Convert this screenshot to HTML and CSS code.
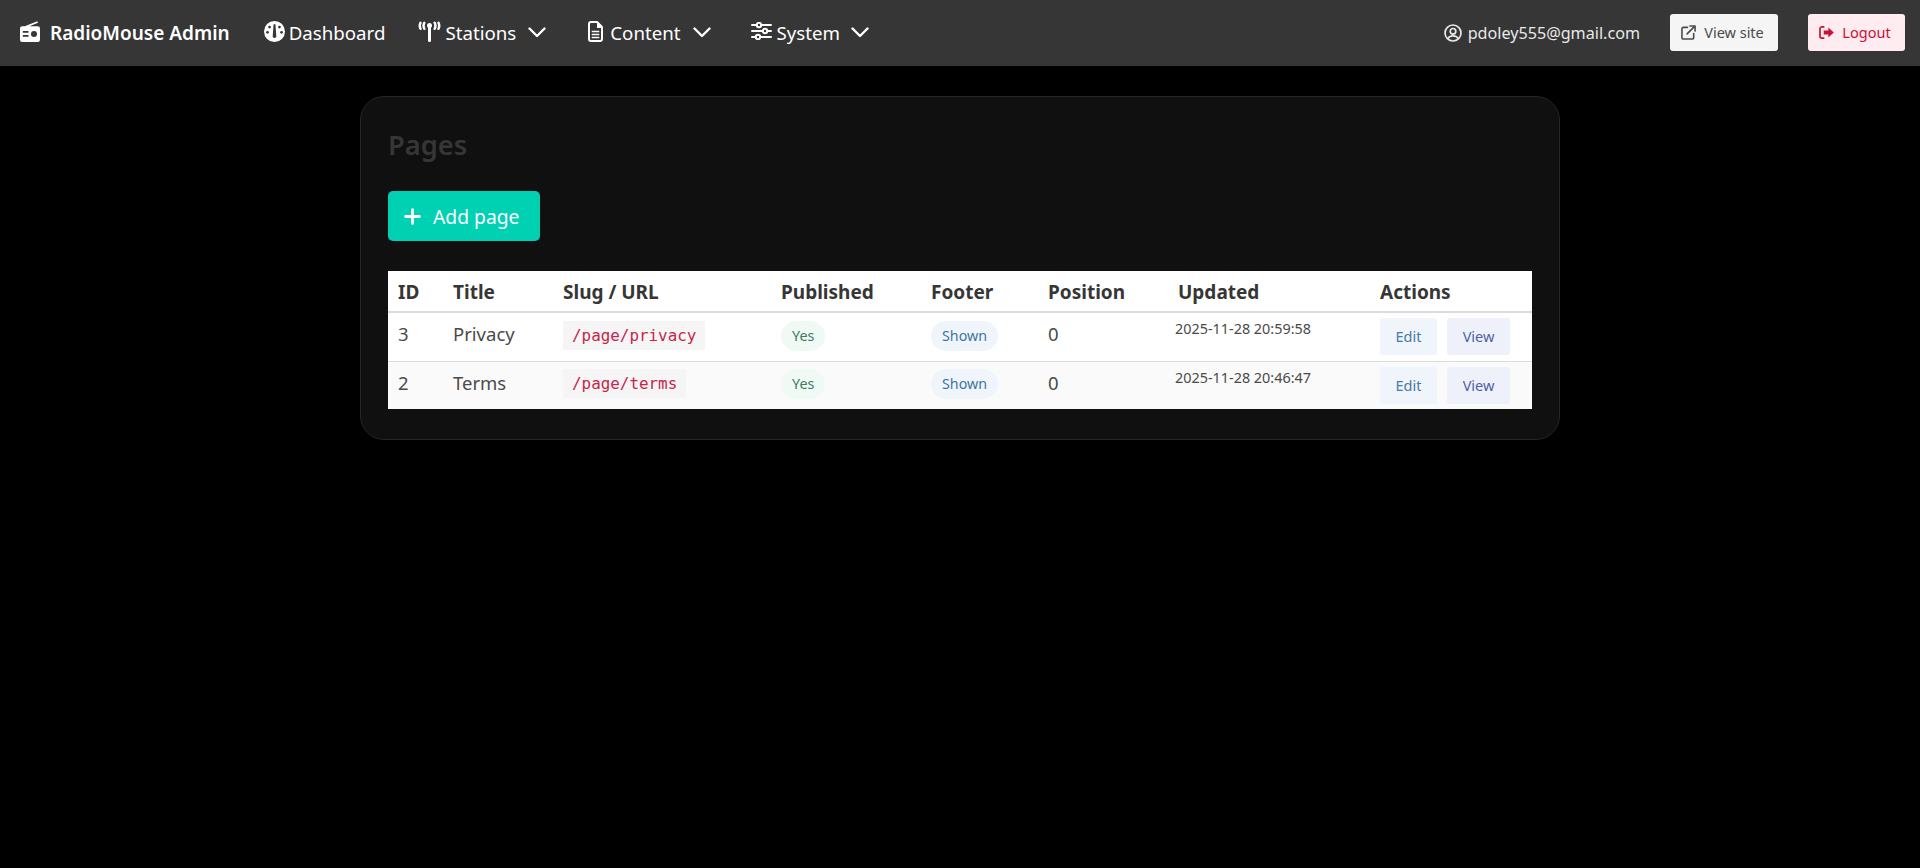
FILE: index.html
```html
<!DOCTYPE html>
<html lang="en">
<head>
<meta charset="utf-8">
<title>Pages - RadioMouse Admin</title>
<link rel="stylesheet" href="styles.css">
</head>
<body>
<nav class="navbar">
  <a class="brand"><svg class="ico ico-brand" viewBox="0 0 20 21"><path fill="currentColor" d="M17.300.2 4.800 5.200 H2.200A2.200 2.200 0 0 0 0 7.400v11.400A2.200 2.200 0 0 0 2.200 21h15.600a2.200 2.200 0 0 0 2.200-2.200V7.400a2.200 2.200 0 0 0-2.200-2.200H9.500l8.500-3.400z"/><path fill="#363636" d="M2.800 10h5.700v1.700H2.800zM2.800 14h5.700v1.700H2.800z"/><circle cx="14" cy="13" r="3" fill="#363636"/></svg>RadioMouse Admin</a>
  <a class="nav-item item-dash"><svg class="ico ico-dash" viewBox="0 0 20 20"><circle cx="10" cy="10" r="10" fill="currentColor"/><g fill="#363636"><circle cx="5.300" cy="5.800" r="1.300"/><circle cx="14.700" cy="5.800" r="1.300"/><circle cx="3.300" cy="10.800" r="1.300"/><circle cx="16.700" cy="10.800" r="1.300"/><path d="M9.100 3h1.800l.8 11.500a1.700 1.700 0 1 1-3.400 0z"/></g></svg>Dashboard</a>
  <a class="nav-item item-stations"><svg class="ico ico-stations" viewBox="0 0 23 21"><rect x="10" y="5" width="3" height="16" rx="1.500" fill="currentColor"/><circle cx="11.500" cy="4.500" r="2.500" fill="currentColor"/><path fill="none" stroke="currentColor" stroke-width="2.500" stroke-linecap="round" d="M2.500 1.800Q1 4.800 2.500 7.800M6.300 1.800Q4.800 4.800 6.300 7.800M20.500 1.800Q22 4.800 20.500 7.800M16.700 1.800Q18.200 4.800 16.700 7.800"/></svg>Stations<svg class="chev" viewBox="0 0 18 11"><path fill="none" stroke="currentColor" stroke-width="2.400" stroke-linecap="round" stroke-linejoin="round" d="M1.500 1.500 9 9l7.500-7.500"/></svg></a>
  <a class="nav-item item-content"><svg class="ico ico-file" viewBox="0 0 15 21"><path fill="none" stroke="currentColor" stroke-width="2" stroke-linejoin="round" d="M3 1h6L14 6v12a2 2 0 0 1-2 2H3a2 2 0 0 1-2-2V3a2 2 0 0 1 2-2z"/><path fill="currentColor" d="M9 1h1l4 4v2H9z"/><path fill="none" stroke="currentColor" stroke-width="1.600" stroke-linecap="square" d="M4.500 10.500h6M4.500 13.500h6M4.500 16.500h6"/></svg>Content<svg class="chev chev-content" viewBox="0 0 18 11"><path fill="none" stroke="currentColor" stroke-width="2.400" stroke-linecap="round" stroke-linejoin="round" d="M1.500 1.500 9 9l7.500-7.500"/></svg></a>
  <a class="nav-item item-system"><svg class="ico ico-sliders" viewBox="0 0 21 18"><path fill="none" stroke="currentColor" stroke-width="2" stroke-linecap="round" d="M1 3h4M11 3h9M1 9h10M17 9h3M1 15h3M10 15h10"/><g fill="none" stroke="currentColor" stroke-width="2"><circle cx="8" cy="3" r="2.200"/><circle cx="14" cy="9" r="2.200"/><circle cx="7" cy="15" r="2.200"/></g></svg>System<svg class="chev chev-system" viewBox="0 0 18 11"><path fill="none" stroke="currentColor" stroke-width="2.400" stroke-linecap="round" stroke-linejoin="round" d="M1.500 1.500 9 9l7.500-7.500"/></svg></a>
  <div class="nav-end">
    <span class="user"><svg class="ico ico-user" viewBox="0 0 18 18"><circle cx="9" cy="9" r="8" fill="none" stroke="currentColor" stroke-width="1.700"/><circle cx="9" cy="7.300" r="2.800" fill="none" stroke="currentColor" stroke-width="1.700"/><path fill="none" stroke="currentColor" stroke-width="1.700" d="M3.800 14.800Q5 11.800 9 11.800t5.200 3"/></svg>pdoley555@gmail.com</span>
    <a class="nav-btn btn-site"><svg class="ico ico-ext" viewBox="0 0 16 16"><path fill="none" stroke="currentColor" stroke-width="1.700" stroke-linecap="round" stroke-linejoin="round" d="M7 2.500H2.500a1.500 1.500 0 0 0-1.500 1.500v9.500A1.500 1.500 0 0 0 2.500 15H12a1.500 1.500 0 0 0 1.500-1.500V9M6.500 9.500 14.500 1.500M9.500 1h5.500v5.500"/></svg>View site</a>
    <a class="nav-btn btn-logout"><svg class="ico ico-logout" viewBox="0 0 16 14"><path fill="none" stroke="currentColor" stroke-width="1.800" stroke-linecap="round" d="M5 1H3a2 2 0 0 0-2 2v8a2 2 0 0 0 2 2h2"/><path fill="currentColor" d="M10 1.500 15.800 7 10 12.500V9.200H5V4.800h5z"/></svg>Logout</a>
  </div>
</nav>
<main class="page">
  <section class="card">
    <h1 class="title">Pages</h1>
    <a class="add-btn"><svg class="ico ico-plus" viewBox="0 0 16 16"><path fill="none" stroke="currentColor" stroke-width="2.600" stroke-linecap="round" d="M8 1.500v13M1.500 8h13"/></svg>Add page</a>
    <table class="table">
      <colgroup>
        <col class="c-id"><col class="c-title"><col class="c-slug"><col class="c-pub"><col class="c-foot"><col class="c-pos"><col class="c-upd"><col class="c-act">
      </colgroup>
      <thead>
        <tr><th>ID</th><th>Title</th><th>Slug / URL</th><th>Published</th><th>Footer</th><th>Position</th><th class="th-upd">Updated</th><th>Actions</th></tr>
      </thead>
      <tbody>
        <tr>
          <td>3</td><td>Privacy</td><td class="cell-code"><code class="slug">/page/privacy</code></td>
          <td class="cell-tag"><span class="tag tag-yes">Yes</span></td><td class="cell-tag"><span class="tag tag-shown">Shown</span></td><td>0</td>
          <td class="date">2025-11-28 20:59:58</td>
          <td class="actions"><a class="act act-edit">Edit</a><a class="act act-view">View</a></td>
        </tr>
        <tr class="alt">
          <td>2</td><td>Terms</td><td class="cell-code"><code class="slug">/page/terms</code></td>
          <td class="cell-tag"><span class="tag tag-yes">Yes</span></td><td class="cell-tag"><span class="tag tag-shown">Shown</span></td><td>0</td>
          <td class="date">2025-11-28 20:46:47</td>
          <td class="actions"><a class="act act-edit">Edit</a><a class="act act-view">View</a></td>
        </tr>
      </tbody>
    </table>
  </section>
</main>
</body>
</html>
```
FILE: styles.css
```css
* { box-sizing: border-box; }
html, body { margin: 0; padding: 0; }
body { background: #000; min-height: 868px; font-family: "Noto Sans", "Open Sans", sans-serif; color: #363636; font-size: 18px; }

.navbar { display: flex; align-items: center; height: 66px; background: #363636; color: #fff; padding: 0 15px 1px 20px; }
.ico { display: block; flex: none; }
.brand { display: flex; align-items: center; font-weight: 600; font-size: 19px; }
.ico-brand { width: 20px; height: 21px; margin-right: 10px; margin-top: -2px; }
.nav-item { display: flex; align-items: center; font-size: 18.700px; }
.item-dash { margin-left: 34px; }
.ico-dash { width: 21px; height: 21px; margin-right: 4px; margin-top: -3px; }
.item-stations { margin-left: 33px; }
.ico-stations { width: 23px; height: 21px; margin-right: 4px; margin-top: -3px; }
.item-content { margin-left: 42px; }
.ico-file { width: 15px; height: 21px; margin-right: 7px; margin-top: -3px; }
.item-system { margin-left: 40px; }
.ico-sliders { width: 21px; height: 18px; margin-right: 5px; margin-top: -3px; }
.chev { display: block; width: 18px; height: 11px; margin-left: 12px; }
.chev-content { margin-left: 12px; }
.chev-system { margin-left: 11px; }

.nav-end { display: flex; align-items: center; margin-left: auto; }
.user { display: flex; align-items: center; font-size: 16.150px; color: #e8e8e8; margin-right: 30px; }
.ico-user { width: 18px; height: 18px; margin-right: 6px; }
.nav-btn { display: flex; align-items: center; justify-content: center; height: 37px; border-radius: 3px; font-size: 14.500px; padding-bottom: 1px; padding-right: 3px; }
.btn-site { width: 108px; background: #f5f5f5; color: #4a4a4a; margin-right: 30px; }
.ico-ext { width: 15px; height: 15px; margin-right: 8px; }
.btn-logout { width: 97px; background: #feecf0; color: #cc0f35; }
.ico-logout { width: 15px; height: 13px; margin-right: 8px; }

.page { width: 1200px; margin: 30px auto 0; }
.card { background: #101010; border: 1px solid #262626; border-radius: 24px; padding: 30px 27px 29px; height: 344px; }
.title { margin: 0; color: #363636; font-size: 27.300px; font-weight: 600; line-height: 36px; }
.add-btn { display: inline-flex; align-items: center; height: 50px; margin-top: 28px; padding: 0 21px 0 16px; border-radius: 5px; background: #00d1b2; color: #fff; font-size: 19.300px; }
.ico-plus { width: 17px; height: 17px; margin-right: 12px; }

.table { width: 1144px; margin-top: 30px; border-collapse: collapse; table-layout: fixed; background: #fff; color: #363636; }
.c-id { width: 55px; } .c-title { width: 110px; } .c-slug { width: 218px; } .c-pub { width: 150px; }
.c-foot { width: 117px; } .c-pos { width: 129px; } .c-upd { width: 203px; } .c-act { width: 162px; }
.table th { height: 41px; padding: 2px 0 0 10px; text-align: left; font-weight: 700; font-size: 19px; border-bottom: 2px solid #dbdbdb; }
.table .th-upd { padding-left: 11px; }
.table td { height: 49px; padding: 0 0 6px 10px; font-size: 18.500px; font-weight: 400; color: #4a4a4a; border-bottom: 1px solid #dbdbdb; vertical-align: middle; }
.table tr:last-child td { border-bottom: 0; height: 48px; }
.alt { background: #fafafa; }
.table .cell-code { padding-bottom: 4px; }
.table .cell-tag { padding-bottom: 2px; }
.slug { display: inline-block; padding: 0 9px; background: #f5f5f5; color: #c7254e; font: 15.900px/29px "DejaVu Sans Mono", "Liberation Mono", monospace; vertical-align: middle; }
.tag { display: inline-block; height: 30px; line-height: 30px; padding: 0 11px; border-radius: 15px; font-size: 14.300px; vertical-align: middle; }
.tag-yes { background: #effaf5; color: #3d7a5e; }
.tag-shown { background: #eff5fb; color: #3f76a3; }
.table .date { font-size: 14.400px; vertical-align: top; padding: 6px 0 0 8px; }
.table .actions { white-space: nowrap; padding-bottom: 0; }
.act { display: inline-block; height: 37px; line-height: 37px; border-radius: 3px; font-size: 14.500px; text-align: center; vertical-align: middle; }
.act-edit { width: 57px; background: #eff5fb; color: #4a7ba6; margin-right: 10px; }
.act-view { width: 63px; background: #eef1fa; color: #4f5fa8; }
```
